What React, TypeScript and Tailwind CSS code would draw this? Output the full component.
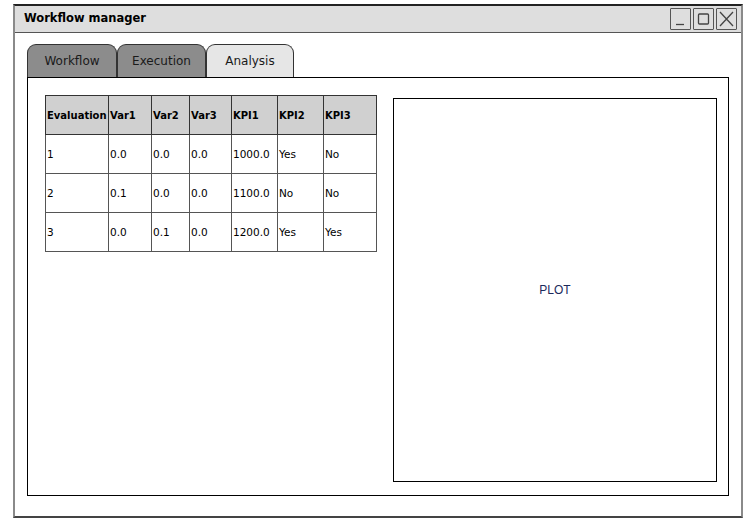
const headers = ['Evaluation', 'Var1', 'Var2', 'Var3', 'KPI1', 'KPI2', 'KPI3'];
const widths = ['w-[63px]', 'w-[43px]', 'w-[38px]', 'w-[42px]', 'w-[46px]', 'w-[46px]', 'w-[53px]'];
const rows = [
  ['1', '0.0', '0.0', '0.0', '1000.0', 'Yes', 'No'],
  ['2', '0.1', '0.0', '0.0', '1100.0', 'No', 'No'],
  ['3', '0.0', '0.1', '0.0', '1200.0', 'Yes', 'Yes'],
];

function WinButton({ kind }: { kind: 'min' | 'max' | 'close' }) {
  return (
    <div className="w-[21px] h-[22px] border border-[#555] rounded-[1px] flex items-center justify-center">
      <svg width="19" height="20" viewBox="0 0 19 20" fill="none" stroke="#444" strokeWidth="1.3">
        {kind === 'min' && <path d="M5 15.5 H13" />}
        {kind === 'max' && <rect x="4.5" y="5" width="10" height="10" rx="1" />}
        {kind === 'close' && <path d="M3 3 L16 17 M16 3 L3 17" />}
      </svg>
    </div>
  );
}

function Tab({ label, active, w }: { label: string; active?: boolean; w: string }) {
  return (
    <div
      className={`${w} h-[33px] rounded-t-[9px] border border-b-0 border-[#333] flex items-center justify-center text-[12px] text-[#1a1a1a] ${
        active ? 'bg-[#e6e6e6]' : 'bg-[#8c8c8c]'
      }`}
    >
      {label}
    </div>
  );
}

export default function App() {
  return (
    <div className="w-[756px] h-[529px] bg-white pt-[4px] pl-[13px] font-['DejaVu_Sans',sans-serif] text-black">
      <div className="w-[730px] h-[514px] border-x-2 border-x-[#8a8a8a] border-t-2 border-t-[#222] border-b-2 border-b-[#444] flex flex-col">
        {/* Title bar */}
        <div className="h-[27px] bg-[#dedede] border-b border-[#555] flex items-center pl-[9px] pr-[4px]">
          <span className="text-[11.5px] font-bold">Workflow manager</span>
          <div className="ml-auto flex gap-[2px]">
            <WinButton kind="min" />
            <WinButton kind="max" />
            <WinButton kind="close" />
          </div>
        </div>

        <div className="pl-[12px] pt-[11px]">
          {/* Tabs */}
          <div className="flex">
            <Tab label="Workflow" w="w-[90px]" />
            <Tab label="Execution" w="w-[89px]" />
            <Tab label="Analysis" active w="w-[88px]" />
          </div>

          {/* Panel */}
          <div className="w-[702px] h-[419px] border border-black flex pl-[17px] pt-[17px]">
            <table className="table-fixed w-[332px] shrink-0 border-collapse self-start text-[10.5px] border border-[#222]">
              <colgroup>
                {widths.map((w, i) => (
                  <col key={i} className={w} />
                ))}
              </colgroup>
              <thead>
                <tr className="bg-[#d0d0d0] h-[39px]">
                  {headers.map((h) => (
                    <th key={h} className="border border-[#333] text-left font-bold text-[10px] px-0 pl-[1px] whitespace-nowrap">
                      {h}
                    </th>
                  ))}
                </tr>
              </thead>
              <tbody>
                {rows.map((r) => (
                  <tr key={r[0]} className="h-[39px]">
                    {r.map((c, i) => (
                      <td key={i} className="border border-[#555] pl-[1px] pt-[2px] whitespace-nowrap">
                        {c}
                      </td>
                    ))}
                  </tr>
                ))}
              </tbody>
            </table>

            <div className="ml-[16px] mt-[3px] w-[324px] h-[384px] shrink-0 border border-black flex items-center justify-center">
              <span className="text-[12px] text-[#1c2a5c] font-['Liberation_Sans',sans-serif]">PLOT</span>
            </div>
          </div>
        </div>
      </div>
    </div>
  );
}
